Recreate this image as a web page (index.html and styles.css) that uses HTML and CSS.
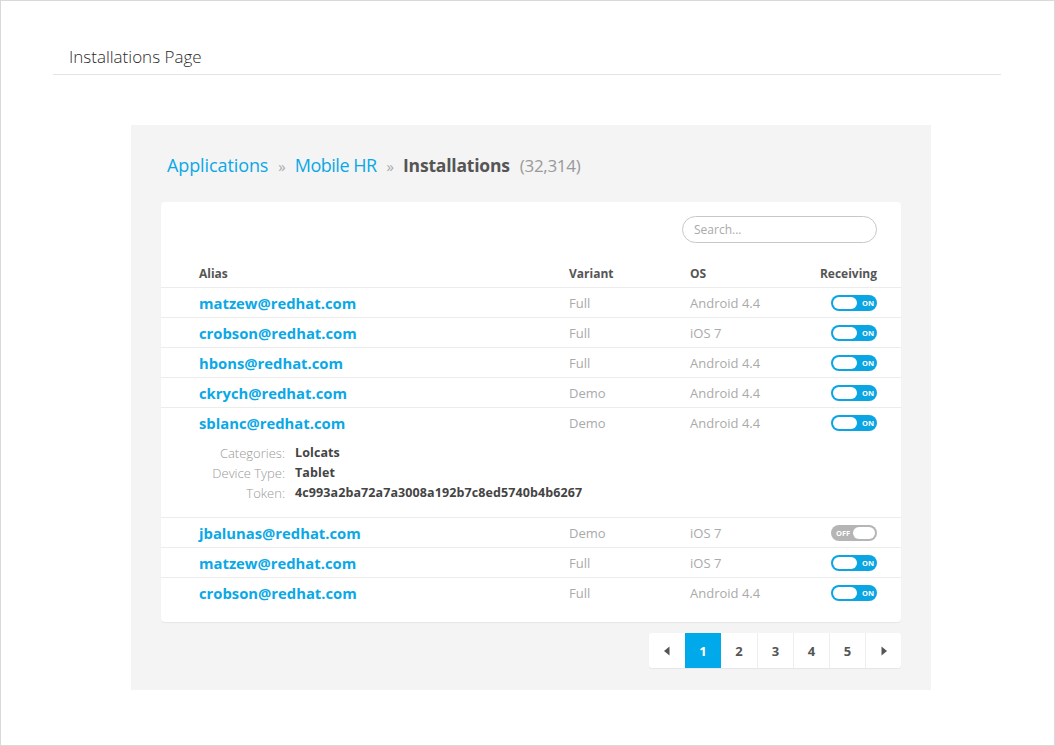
FILE: index.html
```html
<!DOCTYPE html>
<html>
<head>
<meta charset="utf-8">
<link rel="stylesheet" href="styles.css">
</head>
<body>
<div class="frame">
  <header class="page-header"><h1>Installations Page</h1></header>
  <section class="panel">
    <nav class="crumbs">
      <a class="crumb">Applications</a><span class="sep">»</span>
      <a class="crumb">Mobile HR</a><span class="sep">»</span>
      <span class="current">Installations</span><span class="count">(32,314)</span>
    </nav>
    <div class="card">
      <div class="toolbar"><div class="search">Search...</div></div>
      <div class="row head">
        <div>Alias</div><div>Variant</div><div>OS</div><div class="right">Receiving</div>
      </div>
      <div class="row"><a class="alias">matzew@redhat.com</a><div class="muted">Full</div><div class="muted">Android 4.4</div><div class="right"><span class="toggle on"><span class="knob"></span><span class="lbl">ON</span></span></div></div>
      <div class="row"><a class="alias">crobson@redhat.com</a><div class="muted">Full</div><div class="muted">iOS 7</div><div class="right"><span class="toggle on"><span class="knob"></span><span class="lbl">ON</span></span></div></div>
      <div class="row"><a class="alias">hbons@redhat.com</a><div class="muted">Full</div><div class="muted">Android 4.4</div><div class="right"><span class="toggle on"><span class="knob"></span><span class="lbl">ON</span></span></div></div>
      <div class="row"><a class="alias">ckrych@redhat.com</a><div class="muted">Demo</div><div class="muted">Android 4.4</div><div class="right"><span class="toggle on"><span class="knob"></span><span class="lbl">ON</span></span></div></div>
      <div class="expanded">
        <div class="row noline"><a class="alias">sblanc@redhat.com</a><div class="muted">Demo</div><div class="muted">Android 4.4</div><div class="right"><span class="toggle on"><span class="knob"></span><span class="lbl">ON</span></span></div></div>
        <dl class="details">
          <dt>Categories:</dt><dd>Lolcats</dd>
          <dt>Device Type:</dt><dd>Tablet</dd>
          <dt>Token:</dt><dd>4c993a2ba72a7a3008a192b7c8ed5740b4b6267</dd>
        </dl>
      </div>
      <div class="row"><a class="alias">jbalunas@redhat.com</a><div class="muted">Demo</div><div class="muted">iOS 7</div><div class="right"><span class="toggle off"><span class="lbl">OFF</span><span class="knob"></span></span></div></div>
      <div class="row"><a class="alias">matzew@redhat.com</a><div class="muted">Full</div><div class="muted">iOS 7</div><div class="right"><span class="toggle on"><span class="knob"></span><span class="lbl">ON</span></span></div></div>
      <div class="row"><a class="alias">crobson@redhat.com</a><div class="muted">Full</div><div class="muted">Android 4.4</div><div class="right"><span class="toggle on"><span class="knob"></span><span class="lbl">ON</span></span></div></div>
    </div>
    <div class="pager-wrap">
      <div class="pager">
        <span class="pg"><svg width="8" height="10" viewBox="0 0 8 10"><path d="M6.5 0.5 L1 5 L6.5 9.5 Z" fill="#555"/></svg></span>
        <span class="pg active">1</span>
        <span class="pg">2</span>
        <span class="pg">3</span>
        <span class="pg">4</span>
        <span class="pg">5</span>
        <span class="pg"><svg width="8" height="10" viewBox="0 0 8 10"><path d="M1.5 0.5 L7 5 L1.5 9.5 Z" fill="#555"/></svg></span>
      </div>
    </div>
  </section>
</div>
</body>
</html>
```
FILE: styles.css
```css
* { box-sizing: border-box; }
html, body { margin: 0; padding: 0; background: #fff; }
body { font-family: "Open Sans", "Noto Sans", sans-serif; color: #555; }
.frame {
  width: 1055px;
  height: 746px;
  border: 1px solid #d9d9d9;
}
.page-header {
  margin: 0 53px 0 52px;
  padding: 43px 0 0 16px;
  height: 74px;
  border-bottom: 1px solid #e3e3e3;
}
.page-header h1 {
  margin: 0;
  font-size: 17px;
  font-weight: 300;
  line-height: 26px;
  color: #2a2a2a;
}
.panel {
  margin: 50px 0 0 130px;
  width: 800px;
  height: 565px;
  background: #f4f4f4;
  padding: 26px 30px 0 30px;
}
.crumbs {
  display: flex;
  align-items: baseline;
  padding-left: 6px;
  height: 28px;
  font-size: 18px;
  line-height: 28px;
}
.crumb { color: #0aa8e6; }
.crumb:first-child { letter-spacing: -0.1px; }
.crumb + .sep + .crumb { letter-spacing: -0.5px; }
.sep { color: #aaa; font-size: 15px; margin: 0 9px 0 10px; }
.current { color: #555; font-weight: 700; font-size: 17.5px; letter-spacing: -0.2px; }
.count { color: #999; margin-left: 10px; font-size: 17px; letter-spacing: -0.3px; }
.card {
  margin-top: 23px;
  background: #fff;
  border-radius: 4px;
  box-shadow: 0 1px 1px rgba(0,0,0,0.06);
  padding: 14px 0 14px 0;
}
.toolbar {
  display: flex;
  justify-content: flex-end;
  padding-right: 24px;
  height: 28px;
}
.search {
  width: 195px;
  height: 27px;
  border: 1px solid #c8c8c8;
  border-radius: 14px;
  padding-left: 11px;
  font-size: 12px;
  line-height: 25px;
  color: #aaa;
}
.row {
  display: grid;
  grid-template-columns: 370px 121px 1fr 80px;
  align-items: center;
  height: 30px;
  padding: 0 24px 0 38px;
  border-bottom: 1px solid #ececec;
  font-size: 13px;
}
.row.head {
  margin-top: 16px;
  height: 28px;
  font-size: 12px;
  font-weight: 700;
  color: #555;
}
.row.noline { border-bottom: none; }
.row:last-child { border-bottom: none; }
.expanded { border-bottom: 1px solid #ececec; }
.right { display: flex; justify-content: flex-end; }
.alias { color: #0aa8e6; font-weight: 700; font-size: 14.8px; }
.muted { color: #aaa; }
.details {
  margin: 0;
  padding: 5px 0 14px 38px;
  display: grid;
  grid-template-columns: 86px auto;
  column-gap: 10px;
  font-size: 12.5px;
  line-height: 20px;
}
.details dt { text-align: right; color: #999; font-weight: 300; font-size: 13px; }
.details dd { margin: 0; color: #444; font-weight: 700; letter-spacing: 0.1px; }
.toggle {
  display: inline-flex;
  align-items: center;
  width: 46px;
  height: 16px;
  border-radius: 8px;
  padding: 0 2px;
  font-size: 7.5px;
  font-weight: 700;
  color: #fff;
  line-height: 16px;
}
.toggle.on { background: #0aa5e2; }
.toggle.off { background: #b5b5b5; }
.knob {
  width: 24px;
  height: 12px;
  border-radius: 6px;
  background: #fff;
}
.toggle.on .lbl { margin-left: 5px; }
.toggle.off .lbl { margin-left: 3px; margin-right: 3px; }
.pager-wrap {
  display: flex;
  justify-content: flex-end;
  margin-top: 11px;
}
.pager {
  display: flex;
  background: #fff;
  border-radius: 3px;
  box-shadow: 0 1px 1px rgba(0,0,0,0.06);
  overflow: hidden;
}
.pg {
  width: 36px;
  height: 35px;
  display: flex;
  align-items: center;
  justify-content: center;
  font-size: 13px;
  font-weight: 700;
  color: #555;
  border-left: 1px solid #eee;
}
.pg:first-child { border-left: none; }
.pg.active { background: #00a9e9; color: #fff; border-left: none; }
.pg.active + .pg { border-left: none; }
```
